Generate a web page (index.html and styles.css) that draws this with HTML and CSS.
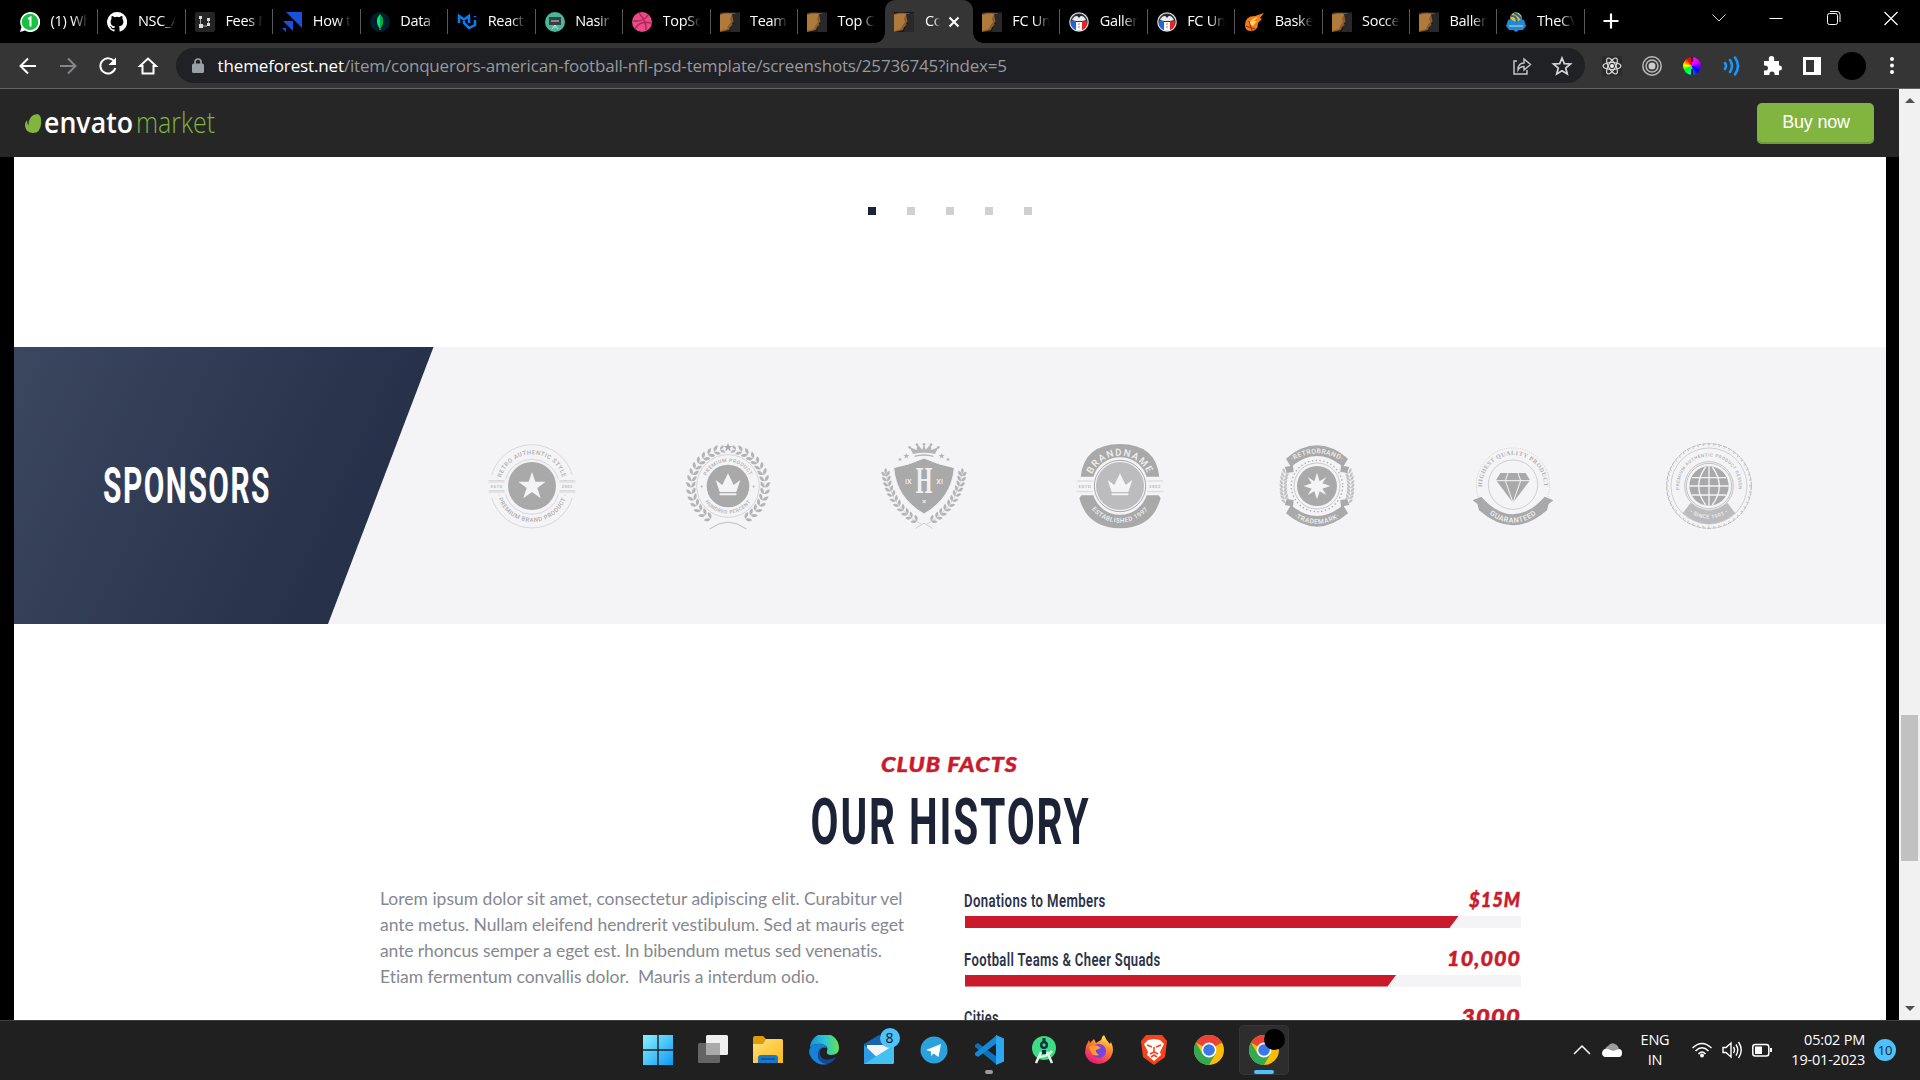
FILE: index.html
```html
<!DOCTYPE html>
<html lang="en">
<head>
<meta charset="utf-8">
<title>Conquerors - American Football NFL PSD Template</title>
<link rel="stylesheet" href="styles.css">
</head>
<body>
<svg class="defs" width="0" height="0" aria-hidden="true">
  <defs>
    <symbol id="face" viewBox="0 0 20 20"><rect width="20" height="20" fill="#19191b"/><path d="M0 2C5 0 11 1 16 1L14 5 15 9 12 11 13 14 10 15 9 18 0 20Z" fill="#8a5c2c"/><path d="M0 3Q6 1 12 2L10 7 11 10 8 14 7 17 0 19Z" fill="#b07a3c"/><path d="M12 2L20 1V20H10L11 14 14 12Z" fill="#29282a"/></symbol>
    <symbol id="fc" viewBox="0 0 20 20"><circle cx="10" cy="10" r="9.8" fill="#d9dde2"/><circle cx="10" cy="10" r="8.5" fill="#2c3037"/><path d="M3 8Q6 2 10 5Q14 2 17 8L13 9H7Z" fill="#e8eaed"/><path d="M1.5 9H7V18Q2 16 1.5 9" fill="#1f65dd"/><path d="M13 9H18.5Q18 16 13 18Z" fill="#ef2020"/><path d="M7 10H13V18.5H7Z" fill="#fff"/><path d="M8 3H12L10 6Z" fill="#222"/><path d="M9 12h2M9 15h2" stroke="#7d8798"/></symbol>
    <symbol id="chrome" viewBox="0 0 30 30"><circle cx="15" cy="15" r="15" fill="#fbbc04"/><path d="M15 15L2 7.5A15 15 0 0 1 28 7.5Z" fill="#ea4335"/><path d="M2 7.5A15 15 0 0 0 15 30L21.5 18.8 8.5 18.8Z" fill="#34a853"/><circle cx="15" cy="15" r="7.4" fill="#fff"/><circle cx="15" cy="15" r="5.8" fill="#3b78e7"/></symbol>
    <g id="leaf"><path d="M0 1Q-15 0 -14 -16Q-2 -15 0 1ZM0 1Q15 0 14 -16Q2 -15 0 1Z"/></g>
    <g id="laurel"><g transform="rotate(-12) translate(0 -111) rotate(90) scale(.8)"><use href="#leaf"/></g>
      <use href="#leaf" transform="rotate(-22) translate(0 -111) rotate(90)"/><use href="#leaf" transform="rotate(-32) translate(0 -111) rotate(90)"/><use href="#leaf" transform="rotate(-42) translate(0 -111) rotate(90)"/><use href="#leaf" transform="rotate(-52) translate(0 -111) rotate(90)"/><use href="#leaf" transform="rotate(-62) translate(0 -111) rotate(90)"/><use href="#leaf" transform="rotate(-72) translate(0 -111) rotate(90)"/><use href="#leaf" transform="rotate(-82) translate(0 -111) rotate(90)"/><use href="#leaf" transform="rotate(-92) translate(0 -111) rotate(90)"/><use href="#leaf" transform="rotate(-102) translate(0 -111) rotate(90)"/><use href="#leaf" transform="rotate(-112) translate(0 -111) rotate(90)"/><use href="#leaf" transform="rotate(-122) translate(0 -111) rotate(90)"/><use href="#leaf" transform="rotate(-132) translate(0 -111) rotate(90)"/><use href="#leaf" transform="rotate(-142) translate(0 -111) rotate(90)"/><use href="#leaf" transform="rotate(-152) translate(0 -111) rotate(90)"/></g>
    <g id="branch"><path d="M-7 115Q-95 70 -115 -40" fill="none" stroke="#c6c6c8" stroke-width="2"/>
      <path d="M-115-54Q-123-46-115-36Q-107-46-115-54Z"/>
      <use href="#leaf" transform="translate(-114 -30) rotate(-6) scale(.9)"/><use href="#leaf" transform="translate(-111 -15) rotate(-10) scale(.9)"/><use href="#leaf" transform="translate(-107 0) rotate(-15) scale(.9)"/><use href="#leaf" transform="translate(-101 15) rotate(-20) scale(.9)"/><use href="#leaf" transform="translate(-94 30) rotate(-26) scale(.9)"/><use href="#leaf" transform="translate(-85 45) rotate(-32) scale(.9)"/><use href="#leaf" transform="translate(-75 59) rotate(-38) scale(.9)"/><use href="#leaf" transform="translate(-63 72) rotate(-43) scale(.9)"/><use href="#leaf" transform="translate(-50 84) rotate(-48) scale(.9)"/><use href="#leaf" transform="translate(-37 95) rotate(-53) scale(.9)"/><use href="#leaf" transform="translate(-22 105) rotate(-56) scale(.9)"/></g>
    <path id="star" d="M0-42L10-13 41-13 16 6 26 37 0 18-26 37-16 6-41-13-10-13Z"/>
    <path id="crown" d="M-37-18L-17-3 0-38 17-3 37-18 25 18H-25ZM-25 22H25V28H-25Z"/>
    <g id="sideleaves"><use href="#leaf" transform="translate(-95 -38) rotate(14) scale(.8)"/><use href="#leaf" transform="translate(-98 -27) rotate(10) scale(.8)"/><use href="#leaf" transform="translate(-100 -16) rotate(6) scale(.8)"/><use href="#leaf" transform="translate(-101 -5) rotate(3) scale(.8)"/><use href="#leaf" transform="translate(-101 6) scale(.8)"/><use href="#leaf" transform="translate(-100 17) rotate(-5) scale(.8)"/><use href="#leaf" transform="translate(-99 28) rotate(-8) scale(.8)"/><use href="#leaf" transform="translate(-96 39) rotate(-12) scale(.8)"/><use href="#leaf" transform="translate(-93 50) rotate(-16) scale(.8)"/></g>
    <path id="up95" d="M-95 0A95 95 0 0 1 95 0"/><path id="dn108" d="M-108 0A108 108 0 0 0 108 0"/>
    <path id="up73" d="M-72 0A72 72 0 0 1 72 0"/><path id="dn83" d="M-83 0A83 83 0 0 0 83 0"/>
    <path id="up91" d="M-91 0A91 91 0 0 1 91 0"/><path id="dn106" d="M-110 0A110 110 0 0 0 110 0"/>
    <path id="banup" d="M-90-64Q0-132 90-64"/><path id="bandn" d="M-90 78Q0 149 90 78"/>
    <path id="up92" d="M-90 23A93 93 0 1 1 90 23"/>
    <path id="up86" d="M-66 60A89 89 0 1 1 66 60"/><path id="dn96" d="M-98 0A98 98 0 0 0 98 0"/>
    <linearGradient id="win" x1="0" y1="0" x2="1" y2="1"><stop stop-color="#8cf0ff"/><stop offset="1" stop-color="#0c9bf5"/></linearGradient>
    <linearGradient id="edge1" x1="0" y1="0" x2="1" y2="0"><stop stop-color="#1b8fd8"/><stop offset=".5" stop-color="#2cc3d9"/><stop offset="1" stop-color="#67e34c"/></linearGradient>
    <linearGradient id="fire" x1=".8" y1="0" x2=".3" y2="1"><stop stop-color="#fff44f"/><stop offset=".45" stop-color="#ff7a2a"/><stop offset="1" stop-color="#e3147f"/></linearGradient>
    <linearGradient id="fold" x1="0" y1="0" x2="1" y2="1"><stop stop-color="#ffe07a"/><stop offset="1" stop-color="#fbb915"/></linearGradient>
  </defs>
</svg>

<header class="tabs">
  <div class="tab"><svg class="fav" viewBox="0 0 20 20"><path d="M0 20L1.5 15A10 10 0 1 1 5 18.6Z" fill="#fff"/><circle cx="10" cy="10" r="8.3" fill="#18c045"/><path d="M8 7L10.5 5.5V14.5" stroke="#fff" stroke-width="2" fill="none"/></svg><span class="label">(1) WhatsApp</span></div>
  <div class="tab"><svg class="fav" viewBox="0 0 16 16"><path fill="#fff" d="M8 0a8 8 0 0 0-2.5 15.6c.4.1.5-.2.5-.4v-1.4c-2.2.5-2.7-1-2.7-1-.4-.9-.9-1.2-.9-1.2-.7-.5.1-.5.1-.5.8.1 1.2.8 1.2.8.7 1.3 1.9.9 2.3.7.1-.5.3-.9.5-1.1-1.8-.2-3.6-.9-3.6-4 0-.9.3-1.6.8-2.1-.1-.2-.4-1 .1-2.1 0 0 .7-.2 2.2.8a7.600 7.600 0 0 1 4 0c1.500-1 2.200-.8 2.200-.8.4 1.100.1 1.900.1 2.100.5.6.8 1.300.8 2.100 0 3.100-1.900 3.700-3.700 3.900.3.300.6.800.6 1.500v2.300c0 .2.100.500.600.4A8 8 0 0 0 8 0"/></svg><span class="label">NSC_Assign</span></div>
  <div class="tab"><svg class="fav" viewBox="0 0 20 20"><rect width="20" height="20" rx="2" fill="#252525"/><g fill="#ddd"><rect x="4" y="4" width="3" height="3"/><rect x="4" y="12" width="4" height="4"/><rect x="12" y="6" width="3" height="3"/><rect x="12" y="11" width="3" height="3"/></g><path d="M5.500 7V12M8 14H12M13.500 9V11" stroke="#aaa"/></svg><span class="label">Fees Manag</span></div>
  <div class="tab"><svg class="fav" viewBox="0 0 20 20"><path d="M4 0H20V16ZM1 9H11V19ZM0 16H4V20Z" fill="#1b50dc"/></svg><span class="label">How to use</span></div>
  <div class="tab"><svg class="fav" viewBox="0 0 20 20"><circle cx="10" cy="10" r="10" fill="#001e2b"/><path d="M10 2Q16 9 10.500 16V18H9.500V16Q4 9 10 2" fill="#00ed64"/><path d="M10 2Q16 9 10 16Z" fill="#00a84c"/></svg><span class="label">Data | Cloud</span></div>
  <div class="tab"><svg class="fav" viewBox="0 0 20 20"><path d="M2 11V4L7 7.500 12 4V11M7 7.500V11L12 16 18 13V8M18 4V5" fill="none" stroke="#087ff0" stroke-width="2.500"/></svg><span class="label">React Com</span></div>
  <div class="tab"><svg class="fav" viewBox="0 0 20 20"><circle cx="10" cy="10" r="10" fill="#49b79a"/><rect x="4" y="5" width="12" height="8" fill="#393e40"/><path d="M6 9H14M10 13V16M7 17L10 13 13 17" stroke="#cfd7d5" fill="none"/></svg><span class="label">Nasir</span></div>
  <div class="tab"><svg class="fav" viewBox="0 0 20 20"><circle cx="10" cy="10" r="10" fill="#ea4c89"/><path d="M1 9Q12 10 16 3M7 1Q15 10 14 18M3 17Q8 8 19 11" fill="none" stroke="#b52259" stroke-width="1.500"/></svg><span class="label">TopScorers</span></div>
  <div class="tab"><svg class="fav"><use href="#face"/></svg><span class="label">Team</span></div>
  <div class="tab bare"><svg class="fav"><use href="#face"/></svg><span class="label">Top Club</span></div>
  <div class="tab active"><svg class="fav"><use href="#face"/></svg><span class="label">Conq</span><svg class="close" viewBox="0 0 12 12"><path d="M1.500 1.500L10.500 10.500M10.500 1.500L1.500 10.500" stroke="#fff" stroke-width="2"/></svg></div>
  <div class="tab"><svg class="fav"><use href="#face"/></svg><span class="label">FC United</span></div>
  <div class="tab"><svg class="fav"><use href="#fc"/></svg><span class="label">Gallery</span></div>
  <div class="tab"><svg class="fav"><use href="#fc"/></svg><span class="label">FC United</span></div>
  <div class="tab"><svg class="fav" viewBox="0 0 20 20"><path d="M1 13Q1 4 11 4L20 1 16 6 18 7 14 11Q14 19 7 19Q1 19 1 13" fill="#f47b20"/><path d="M5 12Q7 6 14 5L10 9 13 9 9 14Z" fill="#ffd451"/><path d="M2 14L11 17M5 9L8 19" stroke="#8c2f10"/></svg><span class="label">Basketball</span></div>
  <div class="tab"><svg class="fav"><use href="#face"/></svg><span class="label">Soccer</span></div>
  <div class="tab"><svg class="fav"><use href="#face"/></svg><span class="label">Ballers</span></div>
  <div class="tab"><svg class="fav" viewBox="0 0 20 20"><circle cx="10" cy="6" r="5.800" fill="#e8bf2c"/><path d="M5 4Q11 3 11 11M8 1Q14 4 15 7" stroke="#2367ad" stroke-width="2" fill="none"/><path d="M2 8L5 7Q10 12 15 7L18 8 20 14 17 18H13L10 20 7 18H3L0 14Z" fill="#2388d2"/><path d="M3 14H17" stroke="#b8dcf2"/></svg><span class="label">TheCVolley</span></div>
  <svg class="newtab" viewBox="0 0 16 16"><path d="M8 .5V15.500M.5 8H15.500" stroke="#fff" stroke-width="2.200"/></svg>
  <div class="controls">
    <svg viewBox="0 0 16 16"><path d="M1.500 4.500L8 11 14.500 4.500" fill="none" stroke="#ddd"/></svg>
    <svg viewBox="0 0 16 16"><path d="M1.500 8.500H14.500" stroke="#fff"/></svg>
    <svg viewBox="0 0 16 16"><rect x="1.500" y="3.500" width="10" height="11" rx="2" fill="none" stroke="#fff"/><path d="M4 1.500H11Q14 1.500 14 4.500V12" fill="none" stroke="#fff"/></svg>
    <svg viewBox="0 0 16 16"><path d="M1.500 2L14.500 15M14.500 2L1.500 15" stroke="#fff" stroke-width="1.200"/></svg>
  </div>
</header>

<nav class="toolbar">
  <svg class="tool" viewBox="0 0 20 20"><path d="M18 10H3M10 2.500L2.500 10 10 17.500" fill="none" stroke="#fff" stroke-width="2"/></svg>
  <svg class="tool" viewBox="0 0 20 20"><path d="M2 10H17M10 2.500L17.500 10 10 17.500" fill="none" stroke="#85868a" stroke-width="2"/></svg>
  <svg class="tool" viewBox="0 0 20 20"><path d="M16.500 6A7.600 7.600 0 1 0 17.300 12" fill="none" stroke="#fff" stroke-width="2"/><path d="M18 1.500V9H10.500Z" fill="#fff"/></svg>
  <svg class="tool" viewBox="0 0 20 20"><path d="M2 10L10 2.500 18 10H15.500V17.500H4.500V10Z" fill="none" stroke="#fff" stroke-width="2"/></svg>
  <div class="omnibox">
    <svg class="lock" viewBox="0 0 12 16"><rect y="5.500" width="12" height="9.500" rx="1.500" fill="#9aa0a6"/><path d="M3 6V4A3 3 0 0 1 9 4V6" fill="none" stroke="#9aa0a6" stroke-width="1.700"/></svg>
    <span class="url"><b>themeforest.net</b>/item/conquerors-american-football-nfl-psd-template/screenshots/25736745?index=5</span>
    <svg class="tool end" viewBox="0 0 20 20"><path d="M5 5H2V18H15V14" fill="none" stroke="#c4c5c8" stroke-width="1.500"/><path d="M6 14Q6 7 12 7V3L18.500 8.500 12 14V10.500Q8 10.500 6 14Z" fill="none" stroke="#c4c5c8" stroke-width="1.400"/></svg>
    <svg class="tool" viewBox="0 0 20 20"><path d="M10 2L12.300 7.600 18.500 8 13.700 12 15.300 18 10 14.700 4.700 18 6.300 12 1.500 8 7.700 7.600Z" fill="none" stroke="#d3d4d6" stroke-width="1.700"/></svg>
  </div>
  <svg class="tool" viewBox="0 0 20 20"><rect width="20" height="20" fill="#2b2b2b"/><g fill="none" stroke="#ddd" stroke-width="1.200"><ellipse cx="10" cy="10" rx="9" ry="3.500"/><ellipse cx="10" cy="10" rx="9" ry="3.500" transform="rotate(60 10 10)"/><ellipse cx="10" cy="10" rx="9" ry="3.500" transform="rotate(120 10 10)"/></g><circle cx="10" cy="10" r="2" fill="#eee"/></svg>
  <svg class="tool" viewBox="0 0 20 20"><g fill="none" stroke="#bbb" stroke-width="1.500"><circle cx="10" cy="10" r="9.200"/><circle cx="10" cy="10" r="6"/></g><circle cx="10" cy="10" r="3.500" fill="#ccc"/></svg>
  <span class="tool wheelbox"><i class="wheel"></i></span>
  <svg class="tool" viewBox="0 0 20 20"><g fill="none" stroke="#1e96f5" stroke-width="2.600" stroke-linecap="round"><path d="M3 7Q5 10 3 13M8 4Q12 10 8 16M13 1.500Q19 10 13 18.500"/></g></svg>
  <svg class="tool" viewBox="0 0 20 20"><path d="M2 5H7Q6 0 9.500 0Q13 0 12 5H17V9.500Q20 9 20 12Q20 15 17 14.500V19H12.500Q13 15.500 10 15.500Q7 15.500 7.500 19H2V14.500Q6 15 6 12Q6 9 2 9.500Z" fill="#fff"/></svg>
  <svg class="tool" viewBox="0 0 20 20"><rect x="1" y="1" width="18" height="18" fill="#fff"/><rect x="4" y="4" width="8" height="12" fill="#353535"/></svg>
  <span class="tool avatarbox"><i class="avatar"></i></span>
  <svg class="tool" viewBox="0 0 20 20"><circle cx="10" cy="3" r="2" fill="#fff"/><circle cx="10" cy="9.500" r="2" fill="#fff"/><circle cx="10" cy="16" r="2" fill="#fff"/></svg>
</nav>

<div class="viewport">
  <div class="page">
    <div class="market">
      <svg class="logo" width="192" height="36" viewBox="0 0 192 36"><path d="M12.500 7Q16.500 8 16.200 16Q15.500 26 8 26Q1 26 0 19Q0 15 2 13Q2 17 3.500 18.500Q3 8 12.500 7Z" fill="#82b440"/><text x="19" y="26" textLength="89" lengthAdjust="spacingAndGlyphs" class="envato">envato</text><text x="111" y="26" textLength="79" lengthAdjust="spacingAndGlyphs" class="mkt">market</text></svg>
      <a class="buy">Buy now</a>
    </div>
    <main class="sheet">
      <div class="dots"><i class="dot on"></i><i class="dot"></i><i class="dot"></i><i class="dot"></i><i class="dot"></i></div>

      <section class="sponsors">
        <div class="ribbon"><svg width="174" height="40" viewBox="0 0 174 40"><text x="1" y="38" textLength="168" lengthAdjust="spacingAndGlyphs" class="cond sp">SPONSORS</text></svg></div>
        <div class="badges">
          <svg class="badge" viewBox="-135 -135 270 270"><g fill="none" stroke="#c8c8ca" stroke-width="2"><path d="M-121-33A126 126 0 0 1 121-33M-121 35A126 126 0 0 0 121 35M-79-20A82 82 0 0 1 79-20M-79 25A82 82 0 0 0 79 25M-130-16H-82M-130-12H-82M82-16H130M82-12H130M-130 14H-82M-130 18H-82M82 14H130M82 18H130"/></g><circle r="72" fill="#a9a9a9"/><use href="#star" fill="#f4f4f7"/><g class="tiny" font-size="18"><text><textPath href="#up95" startOffset="50%">· RETRO AUTHENTIC STYLE ·</textPath></text><text><textPath href="#dn108" startOffset="50%">· PREMIUM BRAND PRODUCT ·</textPath></text><text x="-106" y="5" font-size="12">ESTD</text><text x="106" y="5" font-size="12">2002</text></g></svg>
          <svg class="badge" viewBox="-135 -135 270 270"><g fill="#b4b4b6"><use href="#laurel"/><use href="#laurel" transform="scale(-1 1)"/></g><use href="#star" transform="translate(0 -116) scale(.32)" fill="#a9a9a9"/><path d="M-55 129Q0 88 55 129" fill="none" stroke="#bbb" stroke-width="3"/><circle r="94" fill="#f4f4f7" stroke="#c4c4c6" stroke-width="2"/><circle r="64" fill="#a9a9a9"/><use href="#crown" fill="#f4f4f7"/><g class="tiny" font-size="15"><text><textPath href="#up73" startOffset="50%">PREMIUM PRODUCT</textPath></text><text><textPath href="#dn83" startOffset="50%">HUNDRED PERCENT</textPath></text><text x="-78" y="5">+</text><text x="78" y="5">+</text></g></svg>
          <svg class="badge" viewBox="-135 -135 270 270"><g fill="#b4b4b6"><use href="#branch"/><use href="#branch" transform="scale(-1 1)"/></g><path d="M-26 127L0 112 26 127" fill="none" stroke="#bbb" stroke-width="2"/><path d="M-91-55Q-40-65 0-84Q40-65 91-55Q84 35 0 84Q-84 35-91-55Z" fill="#a9a9a9" stroke="#f4f4f7" stroke-width="3"/><path d="M-33-96L-43-116-22-108-20-125-5-109 0-126 5-109 20-125 22-108 43-116 33-96Q0-104-33-96ZM-29-91Q0-100 29-91V-87Q0-95-29-87Z" fill="#b4b4b6"/><g fill="#b4b4b6"><circle cx="-43" cy="-116" r="4"/><circle cx="-21" cy="-124" r="4"/><circle cy="-125" r="4"/><circle cx="21" cy="-124" r="4"/><circle cx="43" cy="-116" r="4"/><use href="#star" transform="translate(-53 -90) scale(.22)"/><use href="#star" transform="translate(53 -90) scale(.22)"/><use href="#star" transform="translate(-72 -80) scale(.15)"/><use href="#star" transform="translate(72 -80) scale(.15)"/></g><g class="tiny light tight"><text x="-25" y="22" font-size="112" class="serif initial" textLength="50" lengthAdjust="spacingAndGlyphs">H</text><text x="-47" y="-7" font-size="22">IX</text><text x="47" y="-7" font-size="22">XI</text><text y="55" font-size="24">×</text></g></svg>
          <svg class="badge" viewBox="-135 -135 270 270"><g fill="#a9a9a9"><path d="M-118-28Q-108-125 0-126Q108-125 118-28L80-28A84 84 0 0 0-80-28ZM-122 37L-116 28H-80A84 84 0 0 0 80 28H116L122 37Q98 126 0 127Q-98 126-122 37Z"/></g><g fill="none" stroke="#c8c8ca" stroke-width="2"><path d="M-130-15H-82M82-15H130M-130 17H-82M82 17H130"/></g><circle r="77" fill="#f4f4f7" stroke="#a9a9a9" stroke-width="3"/><circle r="72" fill="#bcbcbe"/><use href="#crown" fill="#f4f4f7"/><g class="tiny light"><text font-size="29"><textPath href="#up91" startOffset="50%" class="wide">BRANDNAME</textPath></text><text font-size="19"><textPath href="#dn106" startOffset="50%">ESTABLISHED 1997</textPath></text></g><g class="tiny" font-size="13"><text x="-105" y="5">ESTD</text><text x="105" y="5">2002</text></g></svg>
          <svg class="badge" viewBox="-135 -135 270 270"><g fill="#c2c2c4"><use href="#sideleaves"/><use href="#sideleaves" transform="scale(-1 1)"/></g><g fill="#a9a9a9"><path id="ban" d="M-93-82Q0-162 93-82L80-60 97-57 90-40 70-42 72-62Q0-118-72-62L-70-42-90-40-97-57-80-60Z"/><use href="#ban" transform="scale(1 -1)"/><circle r="60"/></g><circle r="69" fill="none" stroke="#b4b4b6" stroke-width="2"/><circle r="77" fill="none" stroke="#a9a9a9" stroke-width="4" stroke-dasharray="4 7.500"/><path d="M0-40L8-14 28-27 16-8 40 0 16 8 28 27 8 16 0 40-8 16-28 27-16 8-40 0-16-8-28-27-8-14Z" fill="#f4f4f7"/><g class="tiny light" font-size="20"><text><textPath href="#banup" startOffset="50%">·RETROBRAND·</textPath></text><text><textPath href="#bandn" startOffset="50%">·TRADEMARK·</textPath></text></g></svg>
          <svg class="badge" viewBox="-135 -135 270 270"><circle cy="-4" r="110" fill="none" stroke="#bbb" stroke-width="2" stroke-dasharray="3 4"/><circle cy="-4" r="74" fill="#f4f4f7" stroke="#bbb" stroke-width="2"/><path d="M-121 43L-95 32Q0 138 95 32L121 43 107 54 102 73Q50 118 0 118Q-50 118-102 73L-107 54Z" fill="#a9a9a9"/><path d="M-38-39H38L51-17 0 50-51-17Z" fill="#a9a9a9"/><path d="M-51-16H51M-15-39L-23-16 0 50 23-16 15-39" fill="none" stroke="#f4f4f7" stroke-width="3"/><g class="tiny"><text font-size="18" class="serif"><textPath href="#up92" startOffset="50%">HIGHEST QUALITY PRODUCT</textPath></text><text font-size="22" class="light"><textPath href="#dn106" startOffset="50%">GUARANTEED</textPath></text></g></svg>
          <svg class="badge" viewBox="-135 -135 270 270"><circle r="127" fill="none" stroke="#b4b4b6" stroke-width="3" stroke-dasharray="13 3"/><circle r="123" fill="none" stroke="#c8c8ca" stroke-dasharray="4 12" stroke-width="4"/><circle r="114" fill="none" stroke="#bbb" stroke-width="2"/><path d="M-55 50L-79 82Q0 147 79 82L55 50Q0 98-55 50Z" fill="#bcbcbe"/><g fill="#f4f4f7" stroke="#a9a9a9" stroke-width="2"><circle r="73"/><circle r="68"/></g><circle r="59" fill="#a9a9a9"/><path d="M0-59V59M-59 0H59M-51-25H51M-51 27H51M-10-57Q-52 0-10 57M10-57Q52 0 10 57" fill="none" stroke="#f4f4f7" stroke-width="4"/><g class="tiny"><text font-size="13.500"><textPath href="#up86" startOffset="50%">PREMIUM AUTHENTIC PRODUCT DESIGN</textPath></text><text font-size="16" class="light"><textPath href="#dn96" startOffset="50%">• SINCE 1991 •</textPath></text></g></svg>
        </div>
      </section>

      <section class="history">
        <svg class="eyebrow" width="140" height="22" viewBox="0 0 140 22"><text x="2" y="18" textLength="137" lengthAdjust="spacingAndGlyphs" class="brush">CLUB FACTS</text></svg>
        <svg class="title" width="284" height="56" viewBox="0 0 284 56"><text x="2.500" y="50.500" textLength="280" lengthAdjust="spacingAndGlyphs" class="cond hist">OUR HISTORY</text></svg>
        <div class="cols">
          <p class="copy">Lorem ipsum dolor sit amet, consectetur adipiscing elit. Curabitur vel<br><span class="l2">ante metus. Nullam eleifend hendrerit vestibulum. Sed at mauris eget</span><br><span class="l3">ante rhoncus semper a eget est. In bibendum metus sed venenatis.</span><br><span class="l2">Etiam fermentum convallis dolor.&nbsp; Mauris a interdum odio.</span></p>
          <div class="facts">
            <div class="fact"><svg class="row" viewBox="0 0 557 26"><text x="-1" y="17" textLength="142" lengthAdjust="spacingAndGlyphs" class="cond lbl">Donations to Members</text><text x="505" y="17" textLength="52" lengthAdjust="spacingAndGlyphs" class="brush">$15M</text></svg><div class="bar"><i class="fill" style="width:494px"></i></div></div>
            <div class="fact"><svg class="row" viewBox="0 0 557 26"><text x="-1" y="17" textLength="197" lengthAdjust="spacingAndGlyphs" class="cond lbl">Football Teams &amp; Cheer Squads</text><text x="483" y="17" textLength="74" lengthAdjust="spacingAndGlyphs" class="brush">10,000</text></svg><div class="bar"><i class="fill" style="width:432px"></i></div></div>
            <div class="fact"><svg class="row" viewBox="0 0 557 26"><text x="-1" y="17" textLength="35" lengthAdjust="spacingAndGlyphs" class="cond lbl">Cities</text><text x="497" y="17" textLength="60" lengthAdjust="spacingAndGlyphs" class="brush">3000</text></svg><div class="bar"></div></div>
          </div>
        </div>
      </section>
    </main>
  </div>
  <div class="scroll"><i class="up"></i><i class="thumb"></i><i class="down"></i></div>
</div>

<footer class="taskbar">
  <div class="apps">
    <span class="app"><svg viewBox="0 0 30 30"><path d="M0 0H14.300V14.300H0ZM15.700 0H30V14.300H15.700ZM0 15.700H14.300V30H0ZM15.700 15.700H30V30H15.700Z" fill="url(#win)"/></svg></span>
    <span class="app"><svg viewBox="0 0 30 30"><rect y="8" width="22" height="20" rx="1.500" fill="#646464"/><rect x="8" width="22" height="20" rx="1.500" fill="#efefef"/><rect x="8" y="8" width="14" height="12" fill="#aaa"/></svg></span>
    <span class="app"><svg viewBox="0 0 30 30"><path d="M0 3Q0 1 2 1H10L13 4H28V12H0Z" fill="#dc9c0c"/><path d="M0 9H10L13 4H28.500Q30 4 30 5.500V28H0Z" fill="url(#fold)"/><path d="M5 28V23Q5 20 8 20H22Q25 20 25 23V28Z" fill="#1878c8"/><path d="M8 24H22" stroke="#0b4f94" stroke-width="1.500"/></svg></span>
    <span class="app"><svg viewBox="0 0 30 30"><path d="M1 13A14.500 14.500 0 0 1 30 13Q30 20 22 20Q17 20 18 16Q20 11 13 9Q5 8 1 13Z" fill="url(#edge1)"/><path d="M0 17Q1 8 11 9Q16 9 18 13Q12 11 10 17Q10 26 19 29A15 15 0 0 1 0 17" fill="#1683d8"/><path d="M14 12Q8 18 13 23Q18 27 27 22Q23 29 17 29Q7 27 9 18Q10 13 14 12" fill="#114a9c"/></svg></span>
    <span class="app"><svg viewBox="0 0 30 30"><path d="M0 9L15 0 30 9V15L15 25 0 15Z" fill="#1763ae"/><path d="M3 10H27V16L15 25 3 16Z" fill="#f4f4f4"/><path d="M0 10L20 29H0Z" fill="#2d9be6"/><path d="M30 10L0 29H28.500Q30 29 30 27.500Z" fill="#44c0f2"/></svg><b class="count">8</b></span>
    <span class="app"><svg viewBox="0 0 30 30"><circle cx="15" cy="15" r="13.500" fill="#2ba2dd"/><path d="M7 15L22 9 19.500 22 14.500 18.500 12 21V16.500Z" fill="#fff"/></svg></span>
    <span class="app"><svg viewBox="0 0 30 30"><path d="M1 10L4 8 23 22V30L1 12Z" fill="#0b72bd"/><path d="M1 20L4 22 23 8V0L1 18Z" fill="#1689d6"/><path d="M22 0L30 3.500V26.500L22 30Z" fill="#2ba8f1"/></svg><i class="run"></i></span>
    <span class="app"><svg viewBox="0 0 30 30"><circle cx="15" cy="13" r="12" fill="#3ddc84"/><circle cx="15" cy="10" r="4" fill="#073042"/><path d="M13 15H17V19H13ZM13.500 3H16.500V8H13.500Z" fill="#073042"/><circle cx="15" cy="10" r="1.700" fill="#3ddc84"/><path d="M12 17L7 28M18 17L23 28M9 22Q18 22 23 16" stroke="#e8f1ee" stroke-width="2.500" fill="none"/></svg></span>
    <span class="app"><svg viewBox="0 0 30 30"><path d="M2 11L5 5 6 8 10 4 12 8 17 5Q18 1 20 0Q22 5 26 9L27 7Q31 15 27 22Q22 29 14 29Q3 28 1 18Z" fill="url(#fire)"/><circle cx="15" cy="16" r="7" fill="#7542e5"/><path d="M5 12Q9 9 14 11L17 13 12 15Q11 17 15 20 9 22 7 17Z" fill="#ff9b2d"/></svg></span>
    <span class="app"><svg viewBox="0 0 30 30"><path d="M7 0H23L28 6 26 22 15 30 4 22 2 6Z" fill="#f8421d"/><path d="M9 5L15 4 21 5 25 9 21 17 22 20 15 26 8 20 9 17 5 9Z" fill="#fff"/><path d="M8 10L13 12M22 10L17 12M15 12V18M11 19L15 17 19 19M12 22L15 20 18 22" stroke="#f8421d" stroke-width="1.600" fill="none"/></svg></span>
    <span class="app"><svg><use href="#chrome"/></svg></span>
    <span class="app current"><svg><use href="#chrome"/></svg><i class="blob"></i><i class="line"></i></span>
  </div>
  <div class="tray">
    <svg class="t1" width="18" height="20" viewBox="0 0 18 20"><path d="M1 14L9 6 17 14" fill="none" stroke="#fff" stroke-width="1.500"/></svg>
    <svg width="20" height="20" viewBox="0 0 20 20"><path d="M3 12Q3 7 6 6Q9 2 13 4Q16 5 17 9L10 13Z" fill="#9d9d9d"/><path d="M0 13Q1 8 6 9L11 11 17 9Q20 9 20 13Q20 17 17 17H3Q0 16 0 13Z" fill="#fff"/></svg>
    <div class="lang">ENG<br>IN</div>
    <svg width="20" height="20" viewBox="0 0 20 20"><g fill="none" stroke="#fff" stroke-width="1.500"><path d="M.5 8Q10-1 19.500 8M3.500 11Q10 4.500 16.500 11M6.500 14Q10 10 13.500 14"/></g><circle cx="10" cy="15.500" r="2" fill="#fff"/></svg>
    <svg width="20" height="20" viewBox="0 0 20 20"><g fill="none" stroke="#fff" stroke-width="1.400"><path d="M1 7.500H4L9 3V17L4 12.500H1ZM11.500 7Q13.500 10 11.500 13M14 4.500Q17.500 10 14 15.500M16.500 2Q22 10 16.500 18"/></g></svg>
    <svg width="20" height="20" viewBox="0 0 20 20"><rect x=".8" y="4.500" width="16" height="11.500" rx="2.500" fill="none" stroke="#fff" stroke-width="1.500"/><rect x="3" y="6.500" width="7" height="7.500" fill="#fff"/><path d="M18 8H20V12H18Z" fill="#fff"/></svg>
    <div class="clock">05:02 PM<br>19-01-2023</div>
    <b class="notes">10</b>
  </div>
</footer>
</body>
</html>
```

FILE: styles.css
```css
* { box-sizing: border-box; }
body { margin: 0; width: 1920px; height: 1080px; overflow: hidden; display: flex; flex-direction: column; background: #000; font-family: "Open Sans", "Noto Sans", sans-serif; }
svg { display: block; flex: none; }
.defs { position: absolute; }

/* Tab strip */
.tabs { flex: none; height: 43px; display: flex; align-items: stretch; padding-left: 11px; background: #000; }
.tab { position: relative; flex: none; width: 87.44px; display: flex; align-items: center; padding: 0 10px 0 9px; color: #fff; font-size: 14.5px; }
.tab::after { content: ""; position: absolute; right: 0; top: 9px; width: 1px; height: 25px; background: #56585b; }
.tab.bare::after, .tab.active::after { display: none; }
.fav { width: 20px; height: 20px; margin: 0 10.500px 0 0; }
.label { flex: 1; min-width: 0; margin-top: -2px; overflow: hidden; white-space: nowrap; letter-spacing: -.3px; line-height: 22px; -webkit-mask-image: linear-gradient(90deg, #000 60%, transparent 100%); mask-image: linear-gradient(90deg, #000 60%, transparent 100%); }
.tab.active { background: #353535; border-radius: 10px 10px 0 0; }
.tab.active::before { content: ""; position: absolute; left: -10px; right: -10px; bottom: 0; height: 10px; background: radial-gradient(circle at 0 0, transparent 9.5px, #353535 10px) left / 10px 10px no-repeat, radial-gradient(circle at 100% 0, transparent 9.5px, #353535 10px) right / 10px 10px no-repeat; }
.active .label { flex: 0 0 15px; }
.close { width: 12px; height: 12px; margin-left: 8px; }
.newtab { width: 16px; height: 16px; margin: 13px 0 0 18px; }
.controls { margin: 10px 21px 0 auto; display: flex; gap: 41.300px; }
.controls svg { width: 16px; height: 16px; }

/* Toolbar */
.toolbar { flex: none; height: 46px; display: flex; align-items: center; padding: 0 8px 0 7.5px; background: #353535; border-bottom: 1px solid #636363; }
.tool { flex: none; width: 40px; height: 20px; }
.omnibox { width: 1409px; height: 35px; margin: 0 7px 0 8px; display: flex; align-items: center; border-radius: 18px; background: #202124; padding: 0 2.5px 0 16px; }
.lock { width: 12px; height: 16px; }
.url { margin-left: 14px; white-space: nowrap; font-size: 17px; line-height: 24px; color: #969a9f; letter-spacing: -.19px; }
.url b { color: #fff; font-weight: 400; letter-spacing: -.13px; }
.end { margin-left: auto; }
.wheelbox, .avatarbox { display: flex; align-items: center; justify-content: center; }
.wheel { width: 18px; height: 18px; margin-left: 1px; border-radius: 50%; background: conic-gradient(#222 8deg, #f0f 8deg 30deg, #c0f 60deg, #60f 90deg, #00f 135deg, #06f 170deg, #222 172deg 188deg, #0fc 190deg, #0f0 240deg, #ff0 275deg, #f80 300deg, #f00 330deg, #f03 352deg, #222 352deg); }
.avatar { flex: none; width: 28px; height: 28px; border-radius: 50%; background: #000; }

/* Page */
.viewport { flex: 1; min-height: 0; display: flex; }
.page { width: 1899px; display: flex; flex-direction: column; background: #000; }
.market { flex: none; height: 68px; display: flex; align-items: center; justify-content: space-between; padding: 0 25px; background: #262626; }
.logo { margin-top: 4px; }
.envato { font: 600 29.500px "Open Sans", sans-serif; fill: #fff; }
.mkt { font: 300 29.500px "Open Sans", sans-serif; fill: #82b440; }
.buy { width: 117px; height: 41px; padding-left: 1px; border-radius: 5px; background: #82b440; box-shadow: inset 0 -2px #6f9a37; color: #fff; font: 18px/38px "Liberation Sans", sans-serif; letter-spacing: -.2px; text-align: center; }
.sheet { flex: 1; min-height: 0; overflow: hidden; margin: 0 13px 0 14px; background: #fff; }
.dots { display: flex; justify-content: center; gap: 31px; padding: 50px 1px 0 0; }
.dot { width: 8px; height: 8px; background: #d0d0d3; }
.dot.on { background: #1b2338; }

.sponsors { height: 277px; margin-top: 132px; display: flex; background: #f4f4f7; }
.ribbon { flex: none; width: 419.500px; padding: 118px 0 0 88px; background: linear-gradient(115deg, #3b465f 0%, #27324a 75%, #253048 100%); clip-path: polygon(0 0, 100% 0, 314px 100%, 0 100%); }
.cond { font-family: Roboto, "Liberation Sans", sans-serif; }
.sp { font-size: 50px; font-weight: 700; fill: #fff; letter-spacing: 2.500px; }
.badges { flex: 1; display: flex; align-items: center; justify-content: space-between; padding: 1px 132px 0 53px; }
.badge { width: 90px; height: 90px; }
.tiny { fill: #adadaf; font-family: Roboto, sans-serif; font-weight: 500; text-anchor: middle; letter-spacing: 1.500px; }
.tiny .light, .light { fill: #f0f0f2; }
.tight { letter-spacing: 0; }
.initial { text-anchor: start; }
.wide { letter-spacing: 4px; }
.serif { font-family: "Liberation Serif", serif; font-weight: 700; }

.history { padding-top: 129px; display: flex; flex-direction: column; align-items: center; }
.brush { font: italic 900 21px Lato, sans-serif; fill: #ca1b2c; stroke: #ca1b2c; stroke-width: .5px; letter-spacing: 1px; }
.hist { font-size: 64px; font-weight: 700; fill: #1c2337; letter-spacing: 3px; }
.eyebrow { margin: 1px 2px 0 0; }
.title { margin-top: 17px; }
.cols { align-self: stretch; display: flex; padding: 41px 0 0 366px; }
.copy { width: 584.500px; margin: -4.500px 0 0; font: 17.500px/26.100px Lato, sans-serif; color: #858891; white-space: nowrap; font-variant-ligatures: none; }
.l2 { letter-spacing: -.05px; }
.l3 { letter-spacing: -.1px; }
.facts { width: 556px; }
.fact { height: 58.500px; }
.row { width: 556px; height: 26px; overflow: visible; }
.lbl { font-size: 18px; font-weight: 600; fill: #2a334a; letter-spacing: .5px; }
.bar { height: 12px; background: #f4f4f6; }
.fill { display: block; height: 12px; background: #ca1b2c; clip-path: polygon(0 0, 100% 0, calc(100% - 9px) 100%, 0 100%); }

.scroll { width: 21px; display: flex; flex-direction: column; align-items: center; background: #f1f1f1; padding: 9px 0 9px; }
.up { border: 5px solid transparent; border-bottom-color: #505050; border-top: 0; }
.down { border: 5px solid transparent; border-top-color: #505050; border-bottom: 0; margin-top: auto; }
.thumb { width: 17px; height: 146px; margin-top: 612px; background: #c1c1c1; }

/* Taskbar */
.taskbar { flex: none; height: 60px; display: flex; align-items: center; background: #202020; border-top: 1px solid #3b3d3e; color: #fff; }
.apps { display: flex; gap: 5.080px; margin: -1px 0 0 633.300px; }
.app { position: relative; width: 50px; height: 50px; display: flex; align-items: center; justify-content: center; border-radius: 5px; }
.app svg { width: 30px; height: 30px; }
.current { background: #2d2d2d; box-shadow: inset 0 0 0 1px #353535; }
.count { position: absolute; left: 26px; top: 3px; width: 20px; height: 20px; border-radius: 50%; background: #4cc2ff; color: #111; font: 14px/20px "Open Sans", sans-serif; text-align: center; }
.run, .line { position: absolute; bottom: 1px; left: 21px; width: 8px; height: 4px; border-radius: 2px; background: #9a9a9a; }
.line { left: 15px; width: 20px; background: #4cc2ff; }
.blob { position: absolute; left: 25px; top: 4px; width: 21px; height: 21px; border-radius: 50%; background: #000; }
.tray { margin: -1px 0 0 auto; padding-right: 24px; display: flex; align-items: center; gap: 10px; font-size: 14.500px; line-height: 20px; letter-spacing: -.2px; }
.t1 { margin-right: 1px; }
.lang { width: 48px; text-align: center; margin: 0 3px 0 -1px; }
.clock { width: 93px; margin: 0 0 0 -10px; text-align: right; }
.tray .notes { width: 22px; height: 22px; margin-left: -1px; border-radius: 50%; background: #4cc2ff; color: #16242d; font: 13px/22px "Open Sans", sans-serif; text-align: center; }
```
